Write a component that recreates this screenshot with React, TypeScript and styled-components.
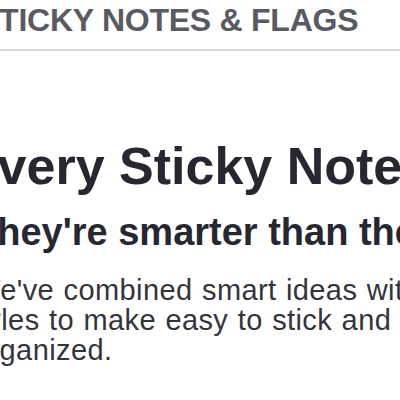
import styled, { createGlobalStyle } from "styled-components";

const GlobalStyle = createGlobalStyle`
  html, body {
    margin: 0;
    padding: 0;
    background: #ffffff;
  }

  body {
    font-family: "Liberation Sans", Arial, Helvetica, sans-serif;
  }
`;

const App = () => {
  return (
    <>
      <GlobalStyle />
      <Page>
        <CategoryBar>
          <CategoryTitle>STICKY NOTES &amp; FLAGS</CategoryTitle>
        </CategoryBar>

        <Intro>
          <ProductTitle>Avery Sticky Notes</ProductTitle>
          <Tagline>They're smarter than they look</Tagline>
          <Description>
            <Line>We've combined smart ideas with fresh</Line>
            <Line $shift={-10}>styles to make easy to stick and remove, and</Line>
            <Line>organized.</Line>
          </Description>
        </Intro>
      </Page>
    </>
  );
};

export default App;

const Page = styled.div`
  width: 400px;
  height: 400px;
  overflow: hidden;
  background: #ffffff;
`;

const CategoryBar = styled.div`
  padding: 4px 0 13px;
  border-bottom: 2px solid #d9d9db;
`;

const CategoryTitle = styled.h2`
  margin: 0 0 0 -22px;
  font-size: 32px;
  line-height: 1;
  font-weight: 700;
  letter-spacing: -0.25px;
  color: #5a5a62;
  white-space: nowrap;
`;

const Intro = styled.div`
  display: flex;
  flex-direction: column;
  padding-top: 89px;
`;

const ProductTitle = styled.h1`
  margin: 0 0 0 -38px;
  font-size: 52px;
  line-height: 1;
  font-weight: 700;
  color: #272731;
  white-space: nowrap;
`;

const Tagline = styled.h3`
  margin: 21px 0 0 -26px;
  font-size: 38px;
  line-height: 1;
  font-weight: 700;
  color: #272731;
  white-space: nowrap;
`;

const Description = styled.p`
  margin: 24px 0 0 -27px;
  font-size: 29px;
  line-height: 30px;
  letter-spacing: 0.4px;
  word-spacing: 1px;
  color: #34343c;
`;

const Line = styled.span<{ $shift?: number }>`
  display: block;
  margin-left: ${({ $shift = 0 }) => $shift}px;
  white-space: nowrap;
`;
